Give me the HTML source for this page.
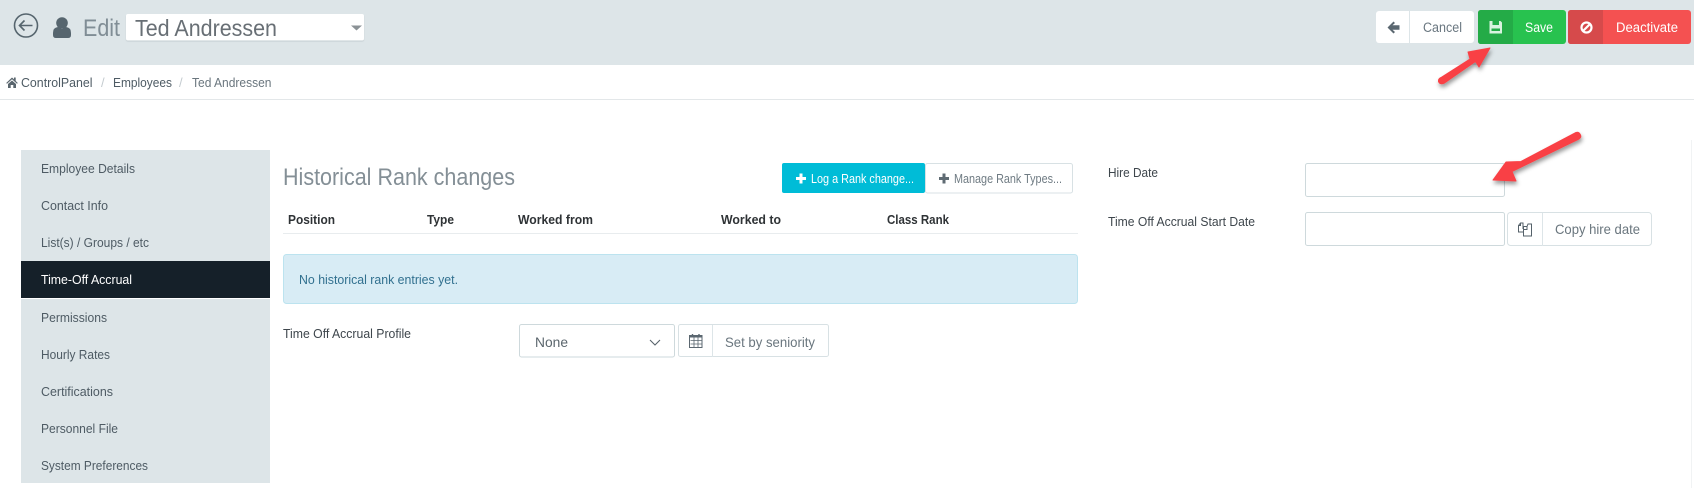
<!DOCTYPE html>
<html><head><meta charset="utf-8"><style>
html,body{margin:0;padding:0;background:#fff;width:1694px;height:488px;overflow:hidden}
svg{display:block}
text{font-family:"Liberation Sans",sans-serif;font-size:13px;fill:#4e5b64}
</style></head><body>
<svg width="1694" height="488" viewBox="0 0 1694 488" xmlns="http://www.w3.org/2000/svg">
<defs><filter id="s" x="-30%" y="-30%" width="160%" height="170%"><feDropShadow dx="1" dy="3" stdDeviation="2.2" flood-color="#000" flood-opacity=".4"/></filter>
<filter id="b" x="-5%" y="-10%" width="110%" height="125%"><feDropShadow dx="0" dy="1" stdDeviation=".6" flood-color="#8a9aa2" flood-opacity=".35"/></filter></defs>
<rect width="1694" height="65" fill="#dde5e8"/>
<rect y="99" width="1694" height="1" fill="#e3e7e9"/>
<rect x="1691" y="140" width="1" height="348" fill="#f1f3f4"/>

<!-- header left -->
<circle cx="26" cy="25.500" r="11.500" fill="none" stroke="#56656e" stroke-width="1.600"/>
<path d="M32.500 25.500H20M24.500 20.500L19.500 25.500L24.500 30.500" fill="none" stroke="#56656e" stroke-width="1.600"/>
<circle cx="62" cy="23" r="5.800" fill="#56656e"/>
<path d="M53 35V33Q53 27.500 58 27L62 29L66 27Q71 27.500 71 33V35Q71 38 68 38H56Q53 38 53 35Z" fill="#56656e"/>
<text x="83" y="36" textLength="37" lengthAdjust="spacingAndGlyphs" style="font-size:24px;fill:#808d95">Edit</text>
<rect x="126" y="14" width="238" height="26.500" rx="2" fill="#fff" filter="url(#b)"/>
<text x="135" y="36" textLength="142" lengthAdjust="spacingAndGlyphs" style="font-size:23px;fill:#686f75">Ted Andressen</text>
<path d="M351 25.500H362L356.500 30.500Z" fill="#8b9296"/>

<!-- breadcrumb -->
<path d="M6.200 83L12 77.500L14 79.300V77.500H15.700V81L17.800 83L17 83.800L12 79.300L7 83.800ZM8 84L12 80.500L16 84V88H13.300V85H10.700V88H8Z" fill="#5a666e"/>
<text x="21" y="87" textLength="71.500" lengthAdjust="spacingAndGlyphs">ControlPanel</text>
<text x="101" y="87" style="fill:#c4cbcf">/</text>
<text x="113" y="87" textLength="59" lengthAdjust="spacingAndGlyphs">Employees</text>
<text x="179" y="87" style="fill:#c4cbcf">/</text>
<text x="192" y="87" textLength="79.500" lengthAdjust="spacingAndGlyphs" style="fill:#6a767e">Ted Andressen</text>

<!-- header buttons -->
<rect x="1376" y="11" width="98" height="32" rx="3" fill="#fff"/>
<rect x="1409" y="11" width="1" height="32" fill="#dde5e8"/>
<path d="M1387.500 27.500L1393.500 21.500L1395 23L1392.500 25.300H1399.500V29.700H1392.500L1395 32L1393.500 33.500Z" fill="#5a6770"/>
<text x="1423" y="32" textLength="39" lengthAdjust="spacingAndGlyphs" style="font-size:13.500px;fill:#6a7780">Cancel</text>
<rect x="1478" y="10" width="88" height="34" rx="3" fill="#28c24f"/>
<path d="M1481 10H1513V44H1481Q1478 44 1478 41V13Q1478 10 1481 10Z" fill="#24ab47"/>
<path d="M1489.500 21H1500.500L1502 22.500V33.500H1489.500Z" fill="#d9f3df"/>
<rect x="1492.500" y="21" width="6.500" height="4" fill="#24ab47"/>
<rect x="1491.500" y="28.500" width="8.500" height="2.500" fill="#24ab47"/>
<text x="1525" y="32" textLength="28" lengthAdjust="spacingAndGlyphs" style="font-size:13.500px;fill:#fff">Save</text>
<rect x="1568" y="10" width="123" height="34" rx="3" fill="#f45151"/>
<path d="M1571 10H1603V44H1571Q1568 44 1568 41V13Q1568 10 1571 10Z" fill="#d64a4b"/>
<circle cx="1586.500" cy="27.500" r="5" fill="none" stroke="#fff" stroke-width="2.200"/>
<path d="M1583 31L1590 24" stroke="#fff" stroke-width="2.200"/>
<text x="1616" y="32" textLength="62" lengthAdjust="spacingAndGlyphs" style="font-size:13.500px;fill:#fff">Deactivate</text>

<!-- sidebar -->
<rect x="21" y="150" width="249" height="333" fill="#dde5e8"/>
<rect x="21" y="261" width="249" height="37" fill="#152029"/>
<rect x="21" y="298" width="249" height="1" fill="#fff"/>
<text x="41" y="173" textLength="94" lengthAdjust="spacingAndGlyphs">Employee Details</text>
<text x="41" y="210" textLength="67" lengthAdjust="spacingAndGlyphs">Contact Info</text>
<text x="41" y="247" textLength="108" lengthAdjust="spacingAndGlyphs">List(s) / Groups / etc</text>
<text x="41" y="284" textLength="91" lengthAdjust="spacingAndGlyphs" style="fill:#fff">Time-Off Accrual</text>
<text x="41" y="322" textLength="66" lengthAdjust="spacingAndGlyphs">Permissions</text>
<text x="41" y="359" textLength="69" lengthAdjust="spacingAndGlyphs">Hourly Rates</text>
<text x="41" y="396" textLength="72" lengthAdjust="spacingAndGlyphs">Certifications</text>
<text x="41" y="433" textLength="77" lengthAdjust="spacingAndGlyphs">Personnel File</text>
<text x="41" y="470" textLength="107" lengthAdjust="spacingAndGlyphs">System Preferences</text>

<!-- main -->
<text x="283" y="185" textLength="232" lengthAdjust="spacingAndGlyphs" style="font-size:24px;fill:#848f96">Historical Rank changes</text>
<rect x="782" y="163" width="143" height="30" rx="2" fill="#00bcd7"/>
<path d="M799.500 174H802.500V177.500H806V180.500H802.500V184H799.500V180.500H796V177.500H799.500Z" fill="#fff" transform="translate(0,-.5)"/>
<text x="811" y="183" textLength="103" lengthAdjust="spacingAndGlyphs" style="font-size:12.500px;fill:#fff">Log a Rank change...</text>
<rect x="925.500" y="163.500" width="147" height="29.500" rx="2" fill="#fff" stroke="#d8e1e4"/>
<path d="M942.500 174H945.500V177.500H949V180.500H945.500V184H942.500V180.500H939V177.500H942.500Z" fill="#5f6b73" transform="translate(0,-.5)"/>
<text x="954" y="183" textLength="108" lengthAdjust="spacingAndGlyphs" style="font-size:12.500px;fill:#6f7b83">Manage Rank Types...</text>
<g style="font-weight:700">
<text x="288" y="224" textLength="47" lengthAdjust="spacingAndGlyphs" style="fill:#2f3336">Position</text>
<text x="427" y="224" textLength="27" lengthAdjust="spacingAndGlyphs" style="fill:#2f3336">Type</text>
<text x="518" y="224" textLength="75" lengthAdjust="spacingAndGlyphs" style="fill:#2f3336">Worked from</text>
<text x="721" y="224" textLength="60" lengthAdjust="spacingAndGlyphs" style="fill:#2f3336">Worked to</text>
<text x="887" y="224" textLength="62" lengthAdjust="spacingAndGlyphs" style="fill:#2f3336">Class Rank</text>
</g>
<rect x="283" y="233" width="795" height="1" fill="#e8ecee"/>
<rect x="283.500" y="254.500" width="794" height="49" rx="3" fill="#d8ecf5" stroke="#bce3ef"/>
<text x="299" y="284" textLength="159" lengthAdjust="spacingAndGlyphs" style="fill:#31708f">No historical rank entries yet.</text>
<text x="283" y="338" textLength="128" lengthAdjust="spacingAndGlyphs" style="fill:#3e464c">Time Off Accrual Profile</text>
<rect x="519.500" y="324.500" width="155" height="32.500" rx="2" fill="#fff" stroke="#ced9dc"/>
<text x="535" y="347" textLength="33" lengthAdjust="spacingAndGlyphs" style="font-size:14px;fill:#5b666d">None</text>
<path d="M650 340L655 345L660 340" fill="none" stroke="#57636b" stroke-width="1.100"/>
<rect x="678.500" y="324.500" width="150" height="32" rx="2" fill="#fff" stroke="#d8e1e4"/>
<rect x="712" y="325" width="1" height="32" fill="#dde5e8"/>
<path d="M690.500 340.500H701.500M690.500 344H701.500M694 337V347M698 337V347" stroke="#5b6770" stroke-width=".8" fill="none"/>
<rect x="689.500" y="335.500" width="12.500" height="12" fill="none" stroke="#5b6770"/>
<rect x="689.500" y="335" width="12.500" height="2.500" fill="#5b6770"/>
<path d="M692.500 334V336M699 334V336" stroke="#5b6770" stroke-width="1.400"/>
<text x="725" y="347" textLength="90" lengthAdjust="spacingAndGlyphs" style="font-size:14px;fill:#6a767e">Set by seniority</text>

<!-- right form -->
<text x="1108" y="177" textLength="50" lengthAdjust="spacingAndGlyphs" style="fill:#3e464c">Hire Date</text>
<text x="1108" y="226" textLength="147" lengthAdjust="spacingAndGlyphs" style="fill:#3e464c">Time Off Accrual Start Date</text>
<rect x="1305.500" y="163.500" width="199" height="33" rx="2" fill="#fff" stroke="#ced9dc"/>
<rect x="1305.500" y="212.500" width="199" height="33" rx="2" fill="#fff" stroke="#ced9dc"/>
<rect x="1507.500" y="212.500" width="144" height="33" rx="3" fill="#fff" stroke="#d8e1e4"/>
<rect x="1542" y="213" width="1" height="33" fill="#dde5e8"/>
<path d="M1523 229V223L1520.500 223L1518.500 225.500V232H1523M1518.500 225.500H1520.500V223" fill="none" stroke="#55616a" stroke-width="1"/>
<path d="M1523.500 236V226.500H1527L1528 224H1531.500V236ZM1523.500 229.500H1527V226.500" fill="none" stroke="#55616a" stroke-width="1"/>
<text x="1555" y="234" textLength="85" lengthAdjust="spacingAndGlyphs" style="font-size:14px;fill:#6a767e">Copy hire date</text>

<!-- arrows -->
<g filter="url(#s)" fill="#f94145" stroke="#f94145" stroke-width="1" stroke-linejoin="round">
<path d="M1441 77.500L1470 59L1468 52L1490 48L1479 67L1475.500 61.500L1444.500 83Q1440 85 1438.500 81.500Q1438 79 1441 77.500Z"/>
<path d="M1576 132.500L1521 161.500L1506 162L1493 180L1516 181L1512 171.500L1579 139Q1582 137 1580 134Q1578.500 131.500 1576 132.500Z"/>
</g>
</svg>
</body></html>
